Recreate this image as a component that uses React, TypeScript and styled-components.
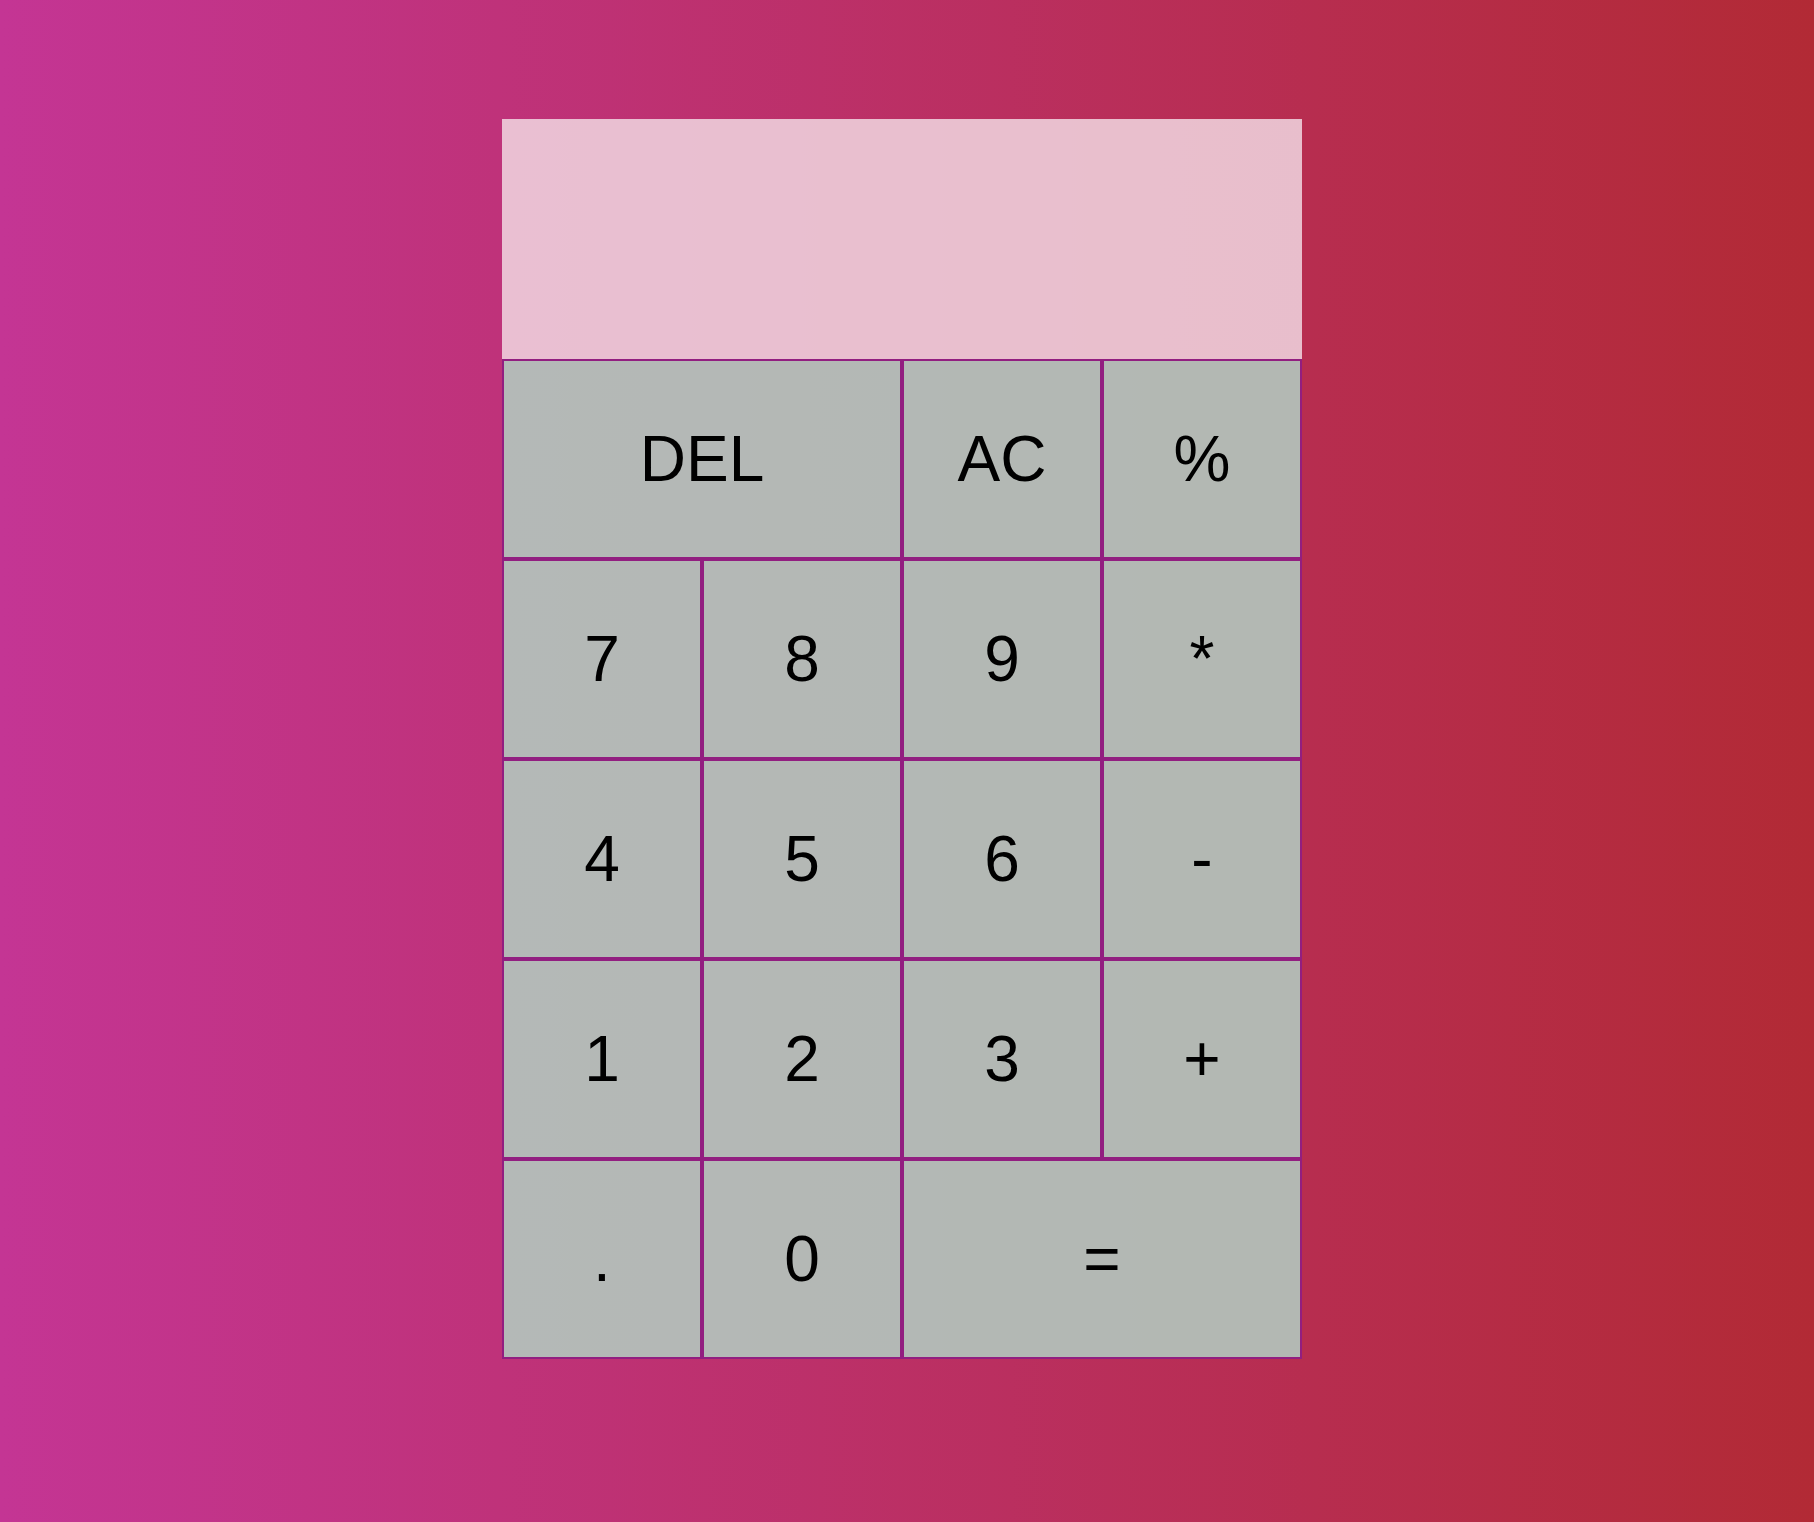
import styled, { createGlobalStyle, css } from "styled-components";

const GlobalStyle = createGlobalStyle`
  *, *::before, *::after {
    box-sizing: border-box;
  }
  html, body {
    margin: 0;
    padding: 0;
  }
  body {
    min-height: 100vh;
    background: linear-gradient(to right, #c43594, #b22a35);
    font-family: "Liberation Sans", Arial, sans-serif;
  }
`;

const Page = styled.main`
  min-height: 100vh;
  display: grid;
  justify-content: center;
  align-content: start;
  padding: 119px 10px 0 0;
`;

const Grid = styled.div`
  display: grid;
  grid-template-columns: repeat(4, 200px);
  grid-template-rows: 240px repeat(5, 200px);
`;

const Output = styled.div`
  grid-column: 1 / -1;
  background-color: rgba(241, 216, 226, 0.85);
  display: flex;
  flex-direction: column;
  align-items: flex-end;
  justify-content: space-around;
  padding: 10px;
  word-wrap: break-word;
  word-break: break-all;
`;

const Key = styled.button<{ $wide?: boolean }>`
  font-family: "Liberation Sans", Arial, sans-serif;
  font-size: 64px;
  color: #000;
  border: 2px solid #921e80;
  outline: none;
  background-color: rgba(179, 200, 190, 0.9);
  cursor: pointer;
  padding: 0;
  ${(p) =>
    p.$wide &&
    css`
      grid-column: span 2;
    `}
`;

const keys: { label: string; wide?: boolean }[] = [
  { label: "DEL", wide: true },
  { label: "AC" },
  { label: "%" },
  { label: "7" },
  { label: "8" },
  { label: "9" },
  { label: "*" },
  { label: "4" },
  { label: "5" },
  { label: "6" },
  { label: "-" },
  { label: "1" },
  { label: "2" },
  { label: "3" },
  { label: "+" },
  { label: "." },
  { label: "0" },
  { label: "=", wide: true },
];

export default function App() {
  return (
    <>
      <GlobalStyle />
      <Page>
        <Grid>
          <Output />
          {keys.map((k) => (
            <Key key={k.label} $wide={k.wide}>
              {k.label}
            </Key>
          ))}
        </Grid>
      </Page>
    </>
  );
}
